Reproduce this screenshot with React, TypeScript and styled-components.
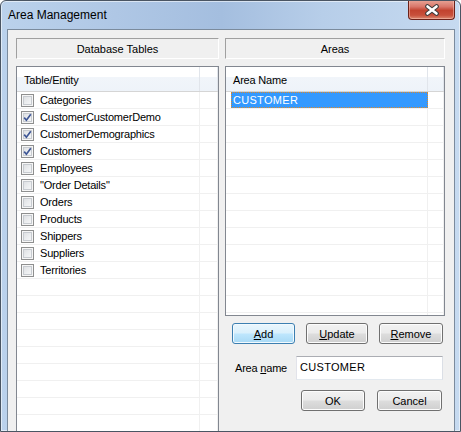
import React from "react";
import styled, { createGlobalStyle, css } from "styled-components";

const Global = createGlobalStyle`
  html, body { margin: 0; padding: 0; background: #fff; }
  body { font-family: "Liberation Sans", Arial, sans-serif; font-size: 11px; color: #000; }
  * { box-sizing: border-box; }
`;

const Window = styled.div`
  width: 461px;
  height: 432px;
  border: 1px solid #4a5563;
  border-radius: 6px 6px 0 0;
  background: linear-gradient(90deg, #bbd2ec 0%, #afc7e5 25%, #a4bedf 48%, #b7cee9 70%, #c6daf0 100%);
  box-shadow: inset 0 0 0 1px rgba(255, 255, 255, 0.55);
  display: flex;
  flex-direction: column;
  padding: 0 5px 7px 6px;
  overflow: hidden;
`;

const TitleBar = styled.div`
  height: 28px;
  flex: none;
  display: flex;
  align-items: center;
  padding-left: 1px;
`;

const Title = styled.span`
  font-family: "Liberation Sans", Arial, sans-serif;
  font-size: 12px;
  line-height: 15px;
  color: #000;
`;

const CloseButton = styled.div`
  margin-left: auto;
  align-self: flex-start;
  margin-top: -1px;
  width: 47px;
  height: 20px;
  border: 1px solid #6b2119;
  border-top: none;
  border-radius: 0 0 4px 4px;
  background: linear-gradient(180deg, #e9a799 0%, #d9776a 35%, #c2432f 55%, #c8503b 80%, #dc8a72 100%);
  box-shadow: inset 0 0 0 1px rgba(255, 210, 200, 0.45);
  display: flex;
  align-items: center;
  justify-content: center;
`;

const Client = styled.div`
  flex: 1;
  border: 1px solid #7b8b9d;
  background: #f0f0f0;
  display: grid;
  grid-template-columns: 203px 220px;
  column-gap: 6px;
  padding: 8px 9px 8px 8px;
  letter-spacing: -0.2px;
`;

const Column = styled.div`
  display: flex;
  flex-direction: column;
  min-height: 0;
`;

const SectionHeader = styled.div`
  height: 21px;
  flex: none;
  border: 1px solid;
  border-color: #a0a0a0 #ffffff #ffffff #a0a0a0;
  display: flex;
  align-items: center;
  justify-content: center;
  font-size: 11px;
  margin-bottom: 7px;
  letter-spacing: 0;
`;

const ListBox = styled.div<{ $height?: number }>`
  border: 1px solid #828790;
  background: #fff;
  overflow: hidden;
  display: flex;
  flex-direction: column;
  ${(p) => (p.$height ? css`height: ${p.$height}px; flex: none;` : css`flex: 1;`)}
`;

const ListHeader = styled.div<{ $first: number }>`
  height: 25px;
  flex: none;
  display: grid;
  grid-template-columns: ${(p) => p.$first}px 1fr;
  background: linear-gradient(180deg, #ffffff 0%, #ffffff 42%, #f1f5fa 42%, #eef3f9 100%);
  border-bottom: 1px solid #d5d5d5;
`;

const HeaderCell = styled.div`
  display: flex;
  align-items: center;
  padding-left: 7px;
  padding-top: 1px;
  border-right: 1px solid #e1e5eb;
`;

const Row = styled.div<{ $first: number }>`
  height: 17px;
  flex: none;
  display: grid;
  grid-template-columns: ${(p) => p.$first}px 1fr;
  border-bottom: 1px solid #f0f0f0;
`;

const Cell = styled.div`
  display: flex;
  align-items: center;
  gap: 6px;
  padding-left: 4px;
  border-right: 1px solid #f0f0f0;
  white-space: nowrap;
`;

const SelectedText = styled.div`
  margin-left: 5px;
  width: calc(100% - 5px);
  height: 16px;
  background: #3399ff;
  color: #fff;
  border: 1px dotted #d9892f;
  display: flex;
  align-items: center;
  padding-left: 1px;
  letter-spacing: 0.3px;
`;

const Box = styled.span`
  width: 13px;
  height: 13px;
  flex: none;
  border: 1px solid #8e8f8f;
  background: linear-gradient(135deg, #d8dadd 0%, #eceef0 55%, #fafafa 100%);
  box-shadow: inset 0 0 0 1px #f6f6f6, inset 0 0 0 2px #c7cbd0;
  display: flex;
  align-items: center;
  justify-content: center;
`;

const ButtonRow = styled.div`
  display: flex;
  gap: 11px;
  padding-left: 7px;
  margin-top: 7px;
`;

const Button = styled.div<{ $default?: boolean; $w: number }>`
  width: ${(p) => p.$w}px;
  height: 21px;
  border: 1px solid #707070;
  border-radius: 3px;
  background: linear-gradient(180deg, #f2f2f2 0%, #ebebeb 48%, #dddddd 52%, #cfcfcf 100%);
  box-shadow: inset 0 0 0 1px #fcfcfc;
  display: flex;
  align-items: center;
  justify-content: center;
  font-size: 11px;
  letter-spacing: 0;
  ${(p) =>
    p.$default &&
    css`
      border-color: #3c7fb1;
      background: linear-gradient(180deg, #eaf6fd 0%, #d9f0fc 48%, #bee6fd 52%, #a7d9f5 100%);
      box-shadow: inset 0 0 0 1px #f2fafe;
    `}
`;

const NameRow = styled.div`
  display: flex;
  align-items: center;
  margin-top: 12px;
  padding-left: 10px;
  gap: 9px;
`;

const Input = styled.div`
  width: 147px;
  height: 24px;
  border: 1px solid;
  border-color: #abadb3 #dbdfe6 #e3e9ef #e2e3ea;
  background: #fff;
  display: flex;
  align-items: center;
  padding-left: 3px;
  padding-bottom: 2px;
  letter-spacing: 0.3px;
`;

const FooterRow = styled.div`
  display: flex;
  justify-content: flex-end;
  gap: 12px;
  padding-right: 3px;
  margin-top: 10px;
`;

const tables: [string, boolean][] = [
  ["Categories", false],
  ["CustomerCustomerDemo", true],
  ["CustomerDemographics", true],
  ["Customers", true],
  ["Employees", false],
  ['"Order Details"', false],
  ["Orders", false],
  ["Products", false],
  ["Shippers", false],
  ["Suppliers", false],
  ["Territories", false],
];

const Check = ({ checked }: { checked: boolean }) => (
  <Box>
    {checked && (
      <svg width="9" height="9" viewBox="0 0 9 9">
        <path d="M1.2 4.6 L3.4 7.2 L7.8 1.2" fill="none" stroke="#3f5796" strokeWidth="1.7" />
      </svg>
    )}
  </Box>
);

export default function App() {
  const leftRows = Array.from({ length: 20 }, (_, i) => tables[i]);
  const rightRows = Array.from({ length: 14 }, (_, i) => i);
  return (
    <>
      <Global />
      <Window>
        <TitleBar>
          <Title>Area Management</Title>
          <CloseButton>
            <svg width="16" height="12" viewBox="0 0 16 12">
              <path d="M3.5 2.5 L12.5 9.5 M12.5 2.5 L3.5 9.5" stroke="#3b3b3b" strokeWidth="4.6" strokeLinecap="round" />
              <path d="M3.5 2.5 L12.5 9.5 M12.5 2.5 L3.5 9.5" stroke="#ffffff" strokeWidth="2.6" strokeLinecap="round" />
            </svg>
          </CloseButton>
        </TitleBar>
        <Client>
          <Column>
            <SectionHeader>Database Tables</SectionHeader>
            <ListBox>
              <ListHeader $first={183}>
                <HeaderCell>Table/Entity</HeaderCell>
                <HeaderCell />
              </ListHeader>
              {leftRows.map((t, i) => (
                <Row key={i} $first={183}>
                  <Cell>
                    {t && (
                      <>
                        <Check checked={t[1]} />
                        <span>{t[0]}</span>
                      </>
                    )}
                  </Cell>
                  <Cell />
                </Row>
              ))}
            </ListBox>
          </Column>
          <Column>
            <SectionHeader>Areas</SectionHeader>
            <ListBox $height={250}>
              <ListHeader $first={202}>
                <HeaderCell>Area Name</HeaderCell>
                <HeaderCell />
              </ListHeader>
              {rightRows.map((i) => (
                <Row key={i} $first={202}>
                  {i === 0 ? <SelectedText>CUSTOMER</SelectedText> : <Cell />}
                  <Cell />
                </Row>
              ))}
            </ListBox>
            <ButtonRow>
              <Button $default $w={63}>
                <u>A</u>dd
              </Button>
              <Button $w={62}>
                <u>U</u>pdate
              </Button>
              <Button $w={64}>
                <u>R</u>emove
              </Button>
            </ButtonRow>
            <NameRow>
              <span>
                Area <u>n</u>ame
              </span>
              <Input>CUSTOMER</Input>
            </NameRow>
            <FooterRow>
              <Button $w={64}>OK</Button>
              <Button $w={65}>Cancel</Button>
            </FooterRow>
          </Column>
        </Client>
      </Window>
    </>
  );
}
